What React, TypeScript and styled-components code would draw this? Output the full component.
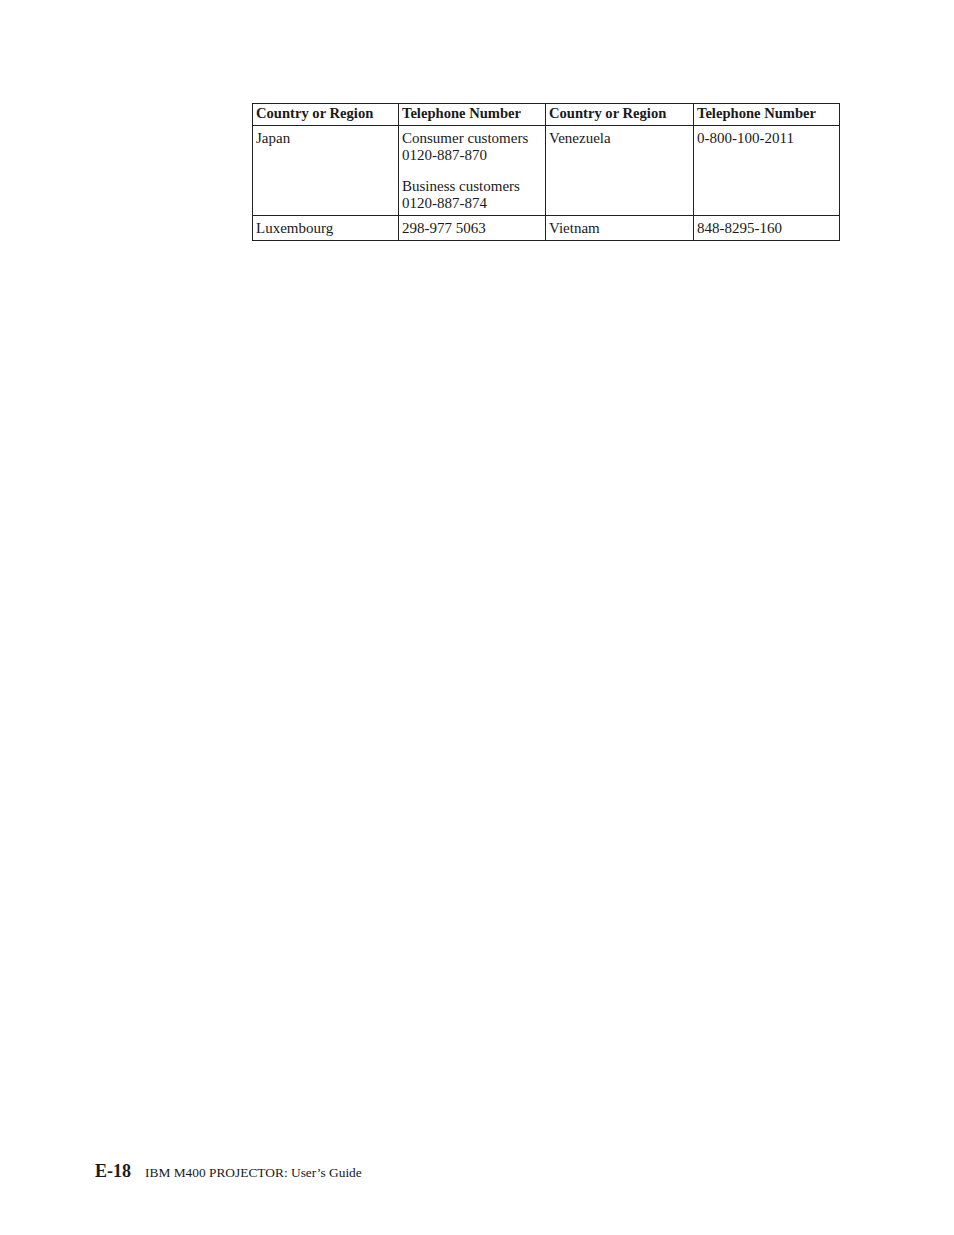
import React from "react";
import styled, { createGlobalStyle } from "styled-components";

const GlobalStyle = createGlobalStyle`
  html, body {
    margin: 0;
    padding: 0;
    background: #ffffff;
  }
  body {
    font-family: "Liberation Serif", "DejaVu Serif", serif;
    color: #1a1a1a;
  }
`;

const Page = styled.div`
  width: 954px;
  height: 1235px;
  display: flex;
  flex-direction: column;
  box-sizing: border-box;
  padding: 103px 0 0 0;
`;

const Table = styled.table`
  margin-left: 252px;
  width: 587px;
  border-collapse: collapse;
  table-layout: fixed;
  font-size: 15px;
  line-height: 17px;
`;

const HeadCell = styled.th`
  border: 1px solid #222;
  text-align: left;
  font-weight: bold;
  font-size: 14.6px;
  padding: 1px 3px 3px 3px;
  vertical-align: top;
`;

const Cell = styled.td`
  border: 1px solid #222;
  padding: 4px 3px 3px 3px;
  vertical-align: top;
`;

const Para = styled.div<{ $gap?: boolean }>`
  margin-top: ${({ $gap }) => ($gap ? "14px" : "0")};
`;

const Footer = styled.div`
  margin-top: auto;
  margin-bottom: 53px;
  padding-left: 95px;
  display: flex;
  align-items: baseline;
  gap: 14px;
`;

const PageNo = styled.span`
  font-weight: bold;
  font-size: 18px;
`;

const Title = styled.span`
  font-size: 13.4px;
`;

const App = () => {
  return (
    <>
      <GlobalStyle />
      <Page>
        <Table>
          <colgroup>
            <col style={{ width: 146 }} />
            <col style={{ width: 147 }} />
            <col style={{ width: 148 }} />
            <col style={{ width: 146 }} />
          </colgroup>
          <thead>
            <tr>
              <HeadCell>Country or Region</HeadCell>
              <HeadCell>Telephone Number</HeadCell>
              <HeadCell>Country or Region</HeadCell>
              <HeadCell>Telephone Number</HeadCell>
            </tr>
          </thead>
          <tbody>
            <tr>
              <Cell>Japan</Cell>
              <Cell>
                <Para>Consumer customers</Para>
                <Para>0120-887-870</Para>
                <Para $gap>Business customers</Para>
                <Para>0120-887-874</Para>
              </Cell>
              <Cell>Venezuela</Cell>
              <Cell>0-800-100-2011</Cell>
            </tr>
            <tr>
              <Cell>Luxembourg</Cell>
              <Cell>298-977 5063</Cell>
              <Cell>Vietnam</Cell>
              <Cell>848-8295-160</Cell>
            </tr>
          </tbody>
        </Table>
        <Footer>
          <PageNo>E-18</PageNo>
          <Title>IBM M400 PROJECTOR: User’s Guide</Title>
        </Footer>
      </Page>
    </>
  );
};

export default App;
